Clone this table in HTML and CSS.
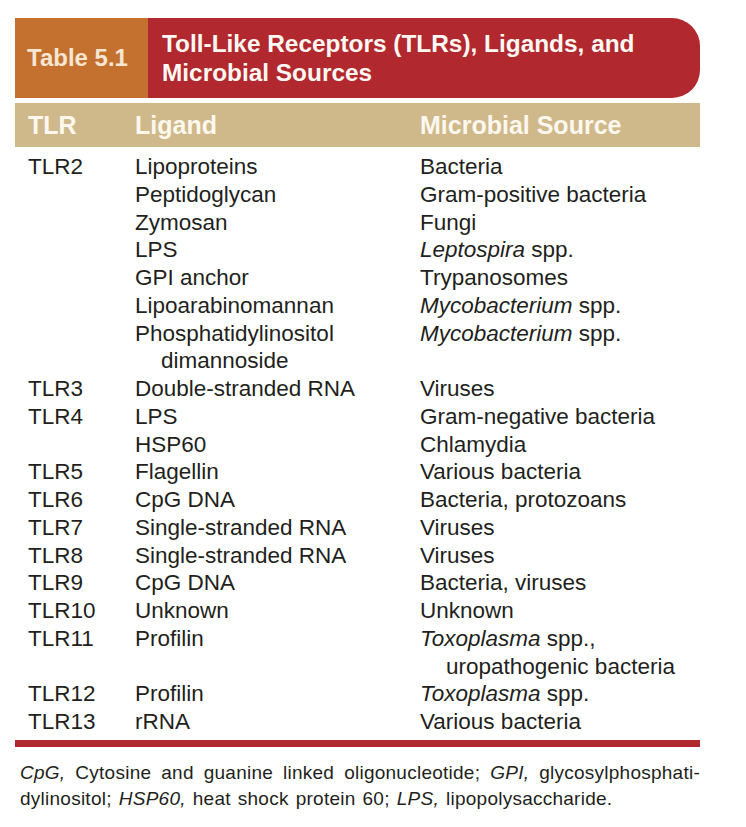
FILE: index.html
```html
<!DOCTYPE html>
<html lang="en">
<head>
<meta charset="utf-8">
<title>Table 5.1 Toll-Like Receptors</title>
<link rel="stylesheet" href="styles.css">
</head>
<body>
<div class="table">
  <div class="banner">
    <div class="num">Table 5.1</div>
    <div class="title">Toll-Like Receptors (TLRs), Ligands, and<br>Microbial Sources</div>
  </div>
  <div class="head">
    <div>TLR</div>
    <div>Ligand</div>
    <div>Microbial Source</div>
  </div>
  <div class="body">
    <div class="row">
      <div><div class="ln">TLR2</div></div>
      <div>
        <div class="ln">Lipoproteins</div>
        <div class="ln">Peptidoglycan</div>
        <div class="ln">Zymosan</div>
        <div class="ln">LPS</div>
        <div class="ln">GPI anchor</div>
        <div class="ln">Lipoarabinomannan</div>
        <div class="ln">Phosphatidylinositol</div>
        <div class="ln ind">dimannoside</div>
      </div>
      <div>
        <div class="ln">Bacteria</div>
        <div class="ln">Gram-positive bacteria</div>
        <div class="ln">Fungi</div>
        <div class="ln"><i>Leptospira</i> spp.</div>
        <div class="ln">Trypanosomes</div>
        <div class="ln"><i>Mycobacterium</i> spp.</div>
        <div class="ln"><i>Mycobacterium</i> spp.</div>
      </div>
    </div>
    <div class="row">
      <div><div class="ln">TLR3</div></div>
      <div><div class="ln">Double-stranded RNA</div></div>
      <div><div class="ln">Viruses</div></div>
    </div>
    <div class="row">
      <div><div class="ln">TLR4</div></div>
      <div><div class="ln">LPS</div><div class="ln">HSP60</div></div>
      <div><div class="ln">Gram-negative bacteria</div><div class="ln">Chlamydia</div></div>
    </div>
    <div class="row">
      <div><div class="ln">TLR5</div></div>
      <div><div class="ln">Flagellin</div></div>
      <div><div class="ln">Various bacteria</div></div>
    </div>
    <div class="row">
      <div><div class="ln">TLR6</div></div>
      <div><div class="ln">CpG DNA</div></div>
      <div><div class="ln">Bacteria, protozoans</div></div>
    </div>
    <div class="row">
      <div><div class="ln">TLR7</div></div>
      <div><div class="ln">Single-stranded RNA</div></div>
      <div><div class="ln">Viruses</div></div>
    </div>
    <div class="row">
      <div><div class="ln">TLR8</div></div>
      <div><div class="ln">Single-stranded RNA</div></div>
      <div><div class="ln">Viruses</div></div>
    </div>
    <div class="row">
      <div><div class="ln">TLR9</div></div>
      <div><div class="ln">CpG DNA</div></div>
      <div><div class="ln">Bacteria, viruses</div></div>
    </div>
    <div class="row">
      <div><div class="ln">TLR10</div></div>
      <div><div class="ln">Unknown</div></div>
      <div><div class="ln">Unknown</div></div>
    </div>
    <div class="row">
      <div><div class="ln">TLR11</div></div>
      <div><div class="ln">Profilin</div></div>
      <div><div class="ln"><i>Toxoplasma</i> spp.,</div><div class="ln ind">uropathogenic bacteria</div></div>
    </div>
    <div class="row">
      <div><div class="ln">TLR12</div></div>
      <div><div class="ln">Profilin</div></div>
      <div><div class="ln"><i>Toxoplasma</i> spp.</div></div>
    </div>
    <div class="row">
      <div><div class="ln">TLR13</div></div>
      <div><div class="ln">rRNA</div></div>
      <div><div class="ln">Various bacteria</div></div>
    </div>
  </div>
  <div class="rule"></div>
  <div class="note">
    <div class="note-line1"><i>CpG,</i> Cytosine and guanine linked oligonucleotide; <i>GPI,</i> glycosylphosphati-</div>
    <div>dylinositol; <i>HSP60,</i> heat shock protein 60; <i>LPS,</i> lipopolysaccharide.</div>
  </div>
</div>
</body>
</html>
```
FILE: styles.css
```css
html, body {
  margin: 0;
  padding: 0;
  background: #ffffff;
}

body {
  font-family: "Liberation Sans", Arial, sans-serif;
  color: #231f20;
}

.table {
  width: 685px;
  margin-left: 15px;
  padding-top: 18px;
}

.banner {
  display: flex;
  height: 80px;
}

.num {
  width: 133px;
  flex: none;
  box-sizing: border-box;
  background: #c4702f;
  color: #f6e6d2;
  font-weight: bold;
  font-size: 24px;
  padding-left: 12px;
  display: flex;
  align-items: center;
}

.title {
  flex: 1;
  background: #b1282f;
  color: #fff8f2;
  border-radius: 0 28px 28px 0;
  font-weight: bold;
  font-size: 24.4px;
  line-height: 29px;
  padding-left: 14px;
  display: flex;
  align-items: center;
}

.head {
  margin-top: 5px;
  height: 44px;
  background: #cfb98b;
  color: #fdf7ee;
  font-weight: bold;
  font-size: 25px;
  display: grid;
  grid-template-columns: 107px 285px 1fr;
  align-items: center;
  padding-left: 13px;
}

.body {
  padding-top: 6px;
  font-size: 22.5px;
  line-height: 27.75px;
}

.row {
  display: grid;
  grid-template-columns: 107px 285px 1fr;
  padding-left: 13px;
}

.ln {
  white-space: nowrap;
}

.ind {
  padding-left: 26px;
}

.rule {
  margin-top: 4px;
  height: 7px;
  background: #b1282f;
}

.note {
  margin-top: 13px;
  padding-left: 5px;
  font-size: 19px;
  letter-spacing: 0.25px;
  word-spacing: 1.5px;
  line-height: 26px;
  color: #231f20;
}

.note-line1 {
  white-space: nowrap;
  text-align: justify;
  text-align-last: justify;
}
```
